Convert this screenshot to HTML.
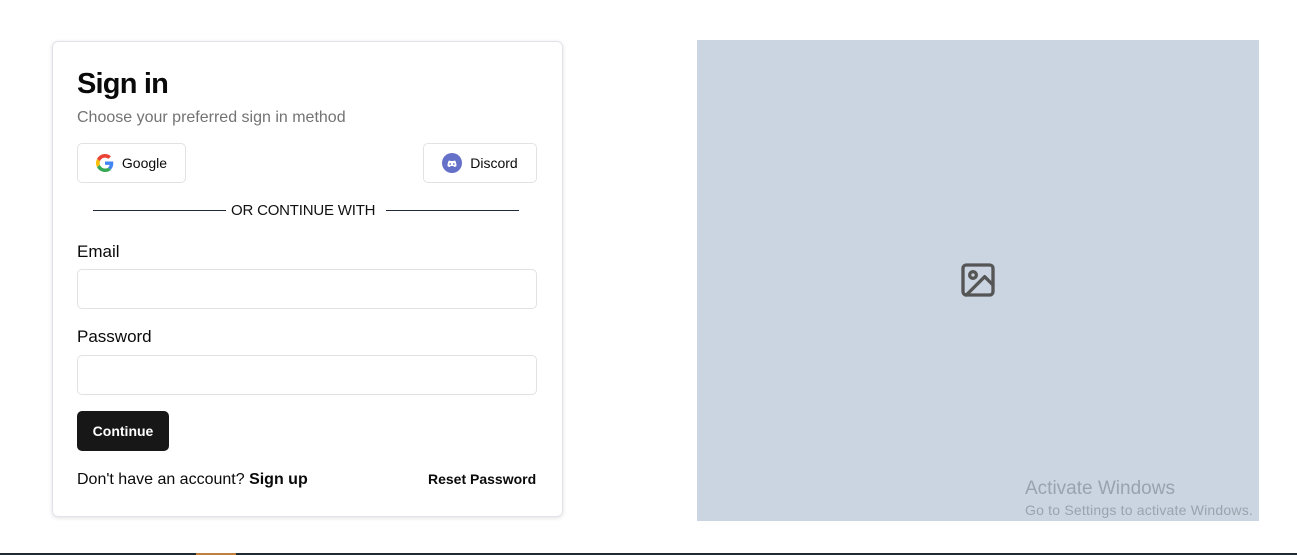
<!DOCTYPE html>
<html><head><meta charset="utf-8"><style>
*{box-sizing:border-box;margin:0;padding:0}
body{width:1297px;height:555px;background:#fff;font-family:"Liberation Sans",sans-serif;position:relative;overflow:hidden;color:#0a0a0a}
.card{position:absolute;left:52px;top:41px;width:511px;height:476px;border:1px solid #e2e3ea;border-radius:6px;box-shadow:0 1px 4px rgba(0,0,0,.12)}
.abs{position:absolute}
h1{position:absolute;left:24px;top:26px;font-size:29px;font-weight:bold;letter-spacing:-.8px}
.sub{left:24px;top:67px;font-size:16px;color:#737373}
.btn{position:absolute;border:1px solid #e2e2e2;border-radius:5px;height:40px;font-size:14px;display:flex;align-items:center;justify-content:center;gap:8px}
.line{position:absolute;top:168px;height:1px;background:#1f2937}
.lbl{font-size:17px;left:24px}
.inp{position:absolute;left:24px;width:460px;height:40px;border:1px solid #e2e2e2;border-radius:5px}
</style></head><body>
<div class="card">
<h1>Sign in</h1>
<div class="abs sub">Choose your preferred sign in method</div>
<div class="btn" style="left:24px;top:101px;width:109px"><svg width="18" height="18" viewBox="0 0 48 48"><path fill="#EA4335" d="M24 9.5c3.5 0 6.6 1.2 9.1 3.6l6.8-6.8C35.8 2.4 30.3 0 24 0 14.6 0 6.6 5.4 2.7 13.3l7.9 6.1C12.5 13.6 17.8 9.5 24 9.5z"/><path fill="#4285F4" d="M46.1 24.5c0-1.6-.1-3.1-.4-4.5H24v9h12.4c-.5 2.9-2.2 5.3-4.6 7l7.4 5.7c4.3-4 6.9-9.9 6.9-17.2z"/><path fill="#FBBC05" d="M10.5 28.6c-.5-1.4-.8-3-.8-4.6s.3-3.2.8-4.6l-7.9-6.1C1 16.6 0 20.2 0 24s1 7.4 2.7 10.7l7.8-6.1z"/><path fill="#34A853" d="M24 48c6.5 0 11.9-2.1 15.9-5.8l-7.4-5.7c-2.1 1.4-4.8 2.3-8.5 2.3-6.2 0-11.5-4.1-13.4-9.8l-7.9 6.1C6.6 42.6 14.6 48 24 48z"/></svg>Google</div>
<div class="btn" style="left:370px;top:101px;width:114px"><svg width="20" height="20" viewBox="0 0 20 20"><circle cx="10" cy="10" r="10" fill="#6570c8"/><path d="M5.5 13c0-3 1-5 1.5-5.5l2 0.5h2l2-.5c.5.5 1.5 2.5 1.5 5.5-1 .8-2 1-2.5 1l-.5-1h-3l-.5 1c-.5 0-1.5-.2-2.5-1z" fill="#fff"/><circle cx="8.2" cy="11" r=".9" fill="#6570c8"/><circle cx="11.8" cy="11" r=".9" fill="#6570c8"/></svg>Discord</div>
<div class="line" style="left:40px;width:133px"></div>
<div class="abs" style="left:178px;top:160px;font-size:15px;color:#111;letter-spacing:-.2px">OR CONTINUE WITH</div>
<div class="line" style="left:333px;width:133px"></div>
<div class="abs lbl" style="top:200px">Email</div>
<div class="inp" style="top:227px"></div>
<div class="abs lbl" style="top:285px">Password</div>
<div class="inp" style="top:313px"></div>
<div class="abs" style="left:24px;top:369px;width:92px;height:40px;background:#171717;border-radius:5px;color:#fff;font-size:14px;font-weight:bold;display:flex;align-items:center;justify-content:center">Continue</div>
<div class="abs" style="left:24px;top:429px;font-size:16px">Don't have an account? <b>Sign up</b></div>
<div class="abs" style="left:375px;top:429px;font-size:14px;font-weight:bold">Reset Password</div>
</div>
<div class="abs" style="left:697px;top:40px;width:562px;height:481px;background:#cbd5e1"></div>
<svg class="abs" style="left:958px;top:260px" width="40" height="40" viewBox="0 0 24 24" fill="none" stroke="#555" stroke-width="2" stroke-linecap="round" stroke-linejoin="round"><rect x="3" y="3" width="18" height="18" rx="2"/><circle cx="9" cy="9" r="2"/><path d="M21 15l-5-5L5 21"/></svg>
<div class="abs" style="left:1025px;top:478px;font-size:19px;color:#9aa3ad">Activate Windows</div>
<div class="abs" style="left:1025px;top:502px;font-size:14px;color:#9aa3ad;letter-spacing:.2px">Go to Settings to activate Windows.</div>
<div class="abs" style="left:0;top:553px;width:1297px;height:2px;background:#1f2a33"></div>
<div class="abs" style="left:196px;top:553px;width:40px;height:2px;background:#c08040"></div>
</body></html>
